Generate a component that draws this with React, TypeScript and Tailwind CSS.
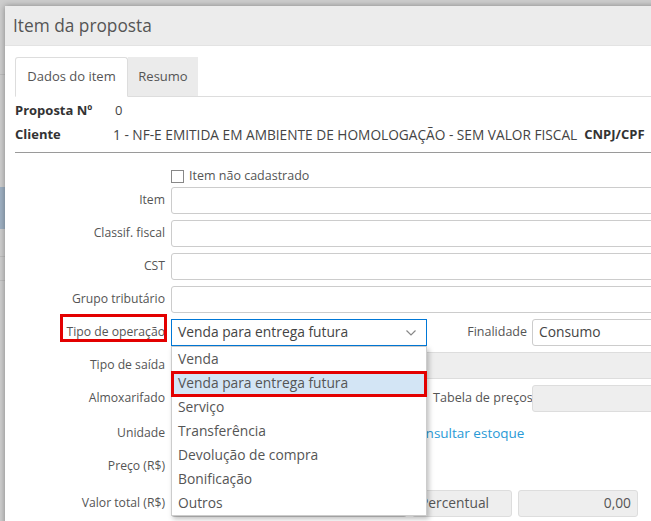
import React from "react";

const Label = ({ children }: { children: React.ReactNode }) => (
  <div className="w-[150px] shrink-0 text-right text-[12.2px] text-[#555] leading-none whitespace-nowrap">{children}</div>
);

const options = [
  "Venda",
  "Venda para entrega futura",
  "Serviço",
  "Transferência",
  "Devolução de compra",
  "Bonificação",
  "Outros",
];

export default function App() {
  return (
    <div className="relative w-[651px] h-[521px] overflow-hidden bg-[#cdcdcd] font-['Open_Sans',sans-serif]">
      {/* background page (behind the modal) */}
      <div className="flex flex-col w-[5px]">
        <div className="h-[75px] border-b border-[#bdbdbd]" />
        <div className="h-[112px]" />
        <div className="h-[42px] bg-[#9eb0c2]" />
        <div className="h-[28px] border-b border-[#bdbdbd]" />
        <div className="h-[24px] border-b border-[#bdbdbd]" />
      </div>

      {/* modal */}
      <div className="absolute left-[5px] top-[6px] w-[700px] h-[560px] bg-white shadow-[0_0_6px_rgba(0,0,0,0.35)]">
        <div className="h-[40px] bg-[#ececec] border-b border-[#e3e3e3] flex items-center pl-[8px] text-[17.3px] text-[#555]">
          Item da proposta
        </div>

        <div className="pl-[10px] pt-[11px]">
          {/* tabs */}
          <div className="flex h-[40px] border-b border-[#dddddd]">
            <div className="w-[113px] h-[40px] bg-white border border-[#dddddd] border-b-white rounded-t-[3px] flex items-center justify-center text-[13px] text-[#555]">
              Dados do item
            </div>
            <div className="w-[70px] h-[39px] bg-[#ebebeb] flex items-center justify-center text-[13px] text-[#555]">
              Resumo
            </div>
          </div>

          {/* info */}
          <div className="flex items-center h-[24px] mt-[2px] text-[13px] whitespace-nowrap">
            <div className="w-[100px] font-bold text-[#333]">Proposta Nº</div>
            <div className="text-[#444]">0</div>
          </div>
          <div className="flex items-center h-[24px] text-[13.7px] whitespace-nowrap">
            <div className="w-[98px] font-bold text-[13px] text-[#333]">Cliente</div>
            <div className="text-[#444]">1 - NF-E EMITIDA EM AMBIENTE DE HOMOLOGAÇÃO - SEM VALOR FISCAL</div>
            <div className="ml-[7px] font-bold text-[13px] text-[#333]">CNPJ/CPF</div>
          </div>
          <div className="mt-[5px] h-[1px] bg-[#9a9a9a]" />

          {/* checkbox */}
          <div className="flex items-center h-[20px] mt-[13px] pl-[156px]">
            <div className="w-[13px] h-[13px] border border-[#888] bg-white" />
            <div className="ml-[5px] text-[12.5px] text-[#555]">Item não cadastrado</div>
          </div>

          {/* form */}
          <div className="flex flex-col gap-[6px] mt-[1px]">
            {["Item", "Classif. fiscal", "CST", "Grupo tributário"].map((l) => (
              <div key={l} className="flex items-center gap-[6px]">
                <Label>{l}</Label>
                <div className="h-[27px] flex-1 border border-[#cccccc] rounded-[3px] bg-white" />
              </div>
            ))}

            {/* Tipo de operação */}
            <div className="flex items-center gap-[6px]">
              <div className="relative w-[150px] shrink-0 text-right text-[12.2px] text-[#555] leading-none whitespace-nowrap">
                Tipo de operação
                <div className="absolute right-[-2px] top-[-12px] w-[107px] h-[28px] border-[3px] border-[#e30000]" />
              </div>
              <div className="relative w-[256px] h-[27px] shrink-0 border border-[#0078d7] bg-white flex items-center pl-[6px] text-[13.8px] text-[#444]">
                Venda para entrega futura
                <svg className="absolute right-[10px] top-[10px]" width="10" height="6" viewBox="0 0 10 6">
                  <path d="M0.5 0.5 L5 5 L9.5 0.5" fill="none" stroke="#888" strokeWidth="1.2" />
                </svg>
                {/* dropdown */}
                <div className="absolute left-[-1px] top-[26px] w-[256px] bg-white border border-[#cccccc] shadow-[2px_3px_5px_rgba(0,0,0,0.25)] z-10">
                  {options.map((o, i) => (
                    <div
                      key={o}
                      className={
                        i === 1
                          ? "relative h-[24px] flex items-center pl-[6px] text-[13.8px] text-[#555] bg-[#d3e5f5]"
                          : "h-[24px] flex items-center pl-[6px] text-[13.8px] text-[#555]"
                      }
                    >
                      {o}
                      {i === 1 && <div className="absolute left-[-1px] top-[0px] w-[256px] h-[26px] border-[3px] border-[#e30000]" />}
                    </div>
                  ))}
                </div>
              </div>
              <div className="w-[94px] shrink-0 text-right text-[12.5px] text-[#555] whitespace-nowrap">Finalidade</div>
              <div className="h-[27px] flex-1 border border-[#cccccc] rounded-[3px] bg-white flex items-center pl-[6px] text-[13.8px] text-[#444] ml-[-1px]">
                Consumo
              </div>
            </div>

            {/* Tipo de saída */}
            <div className="flex items-center gap-[6px]">
              <Label>Tipo de saída</Label>
              <div className="h-[27px] flex-1 border border-[#dddddd] rounded-[3px] bg-[#eeeeee]" />
            </div>

            {/* Almoxarifado */}
            <div className="flex items-center gap-[6px]">
              <Label>Almoxarifado</Label>
              <div className="h-[27px] w-[256px] shrink-0 border border-[#dddddd] rounded-[3px] bg-[#eeeeee]" />
              <div className="w-[94px] shrink-0 text-right text-[12.6px] text-[#555] whitespace-nowrap">Tabela de preços</div>
              <div className="h-[27px] flex-1 border border-[#dddddd] rounded-[3px] bg-[#eeeeee] ml-[-1px]" />
            </div>

            {/* Unidade */}
            <div className="flex items-center gap-[6px] h-[27px] mt-[2px]">
              <Label>Unidade</Label>
              <div className="h-[27px] w-[232px] shrink-0 border border-[#cccccc] rounded-[3px] bg-white" />
              <div className="text-[13.5px] text-[#2a9ad6] whitespace-nowrap">Consultar estoque</div>
            </div>

            {/* Preço */}
            <div className="flex items-center gap-[6px] h-[27px]">
              <Label>Preço (R$)</Label>
              <div className="h-[27px] w-[232px] shrink-0 border border-[#cccccc] rounded-[3px] bg-white" />
            </div>

            {/* Valor total */}
            <div className="flex items-center gap-[6px] mt-[4px]">
              <Label>Valor total (R$)</Label>
              <div className="h-[27px] w-[236px] shrink-0 border border-[#cccccc] rounded-[3px] bg-white" />
              <div className="h-[27px] w-[100px] shrink-0 border border-[#dddddd] rounded-[3px] bg-[#eeeeee] flex items-center pl-[7px] text-[13.8px] text-[#555] ml-[-1px]">
                Percentual
              </div>
              <div className="h-[27px] w-[120px] shrink-0 border border-[#dddddd] rounded-[3px] bg-[#eeeeee] flex items-center justify-end pr-[6px] text-[13.8px] text-[#555]">
                0,00
              </div>
            </div>
          </div>
        </div>
      </div>
    </div>
  );
}
